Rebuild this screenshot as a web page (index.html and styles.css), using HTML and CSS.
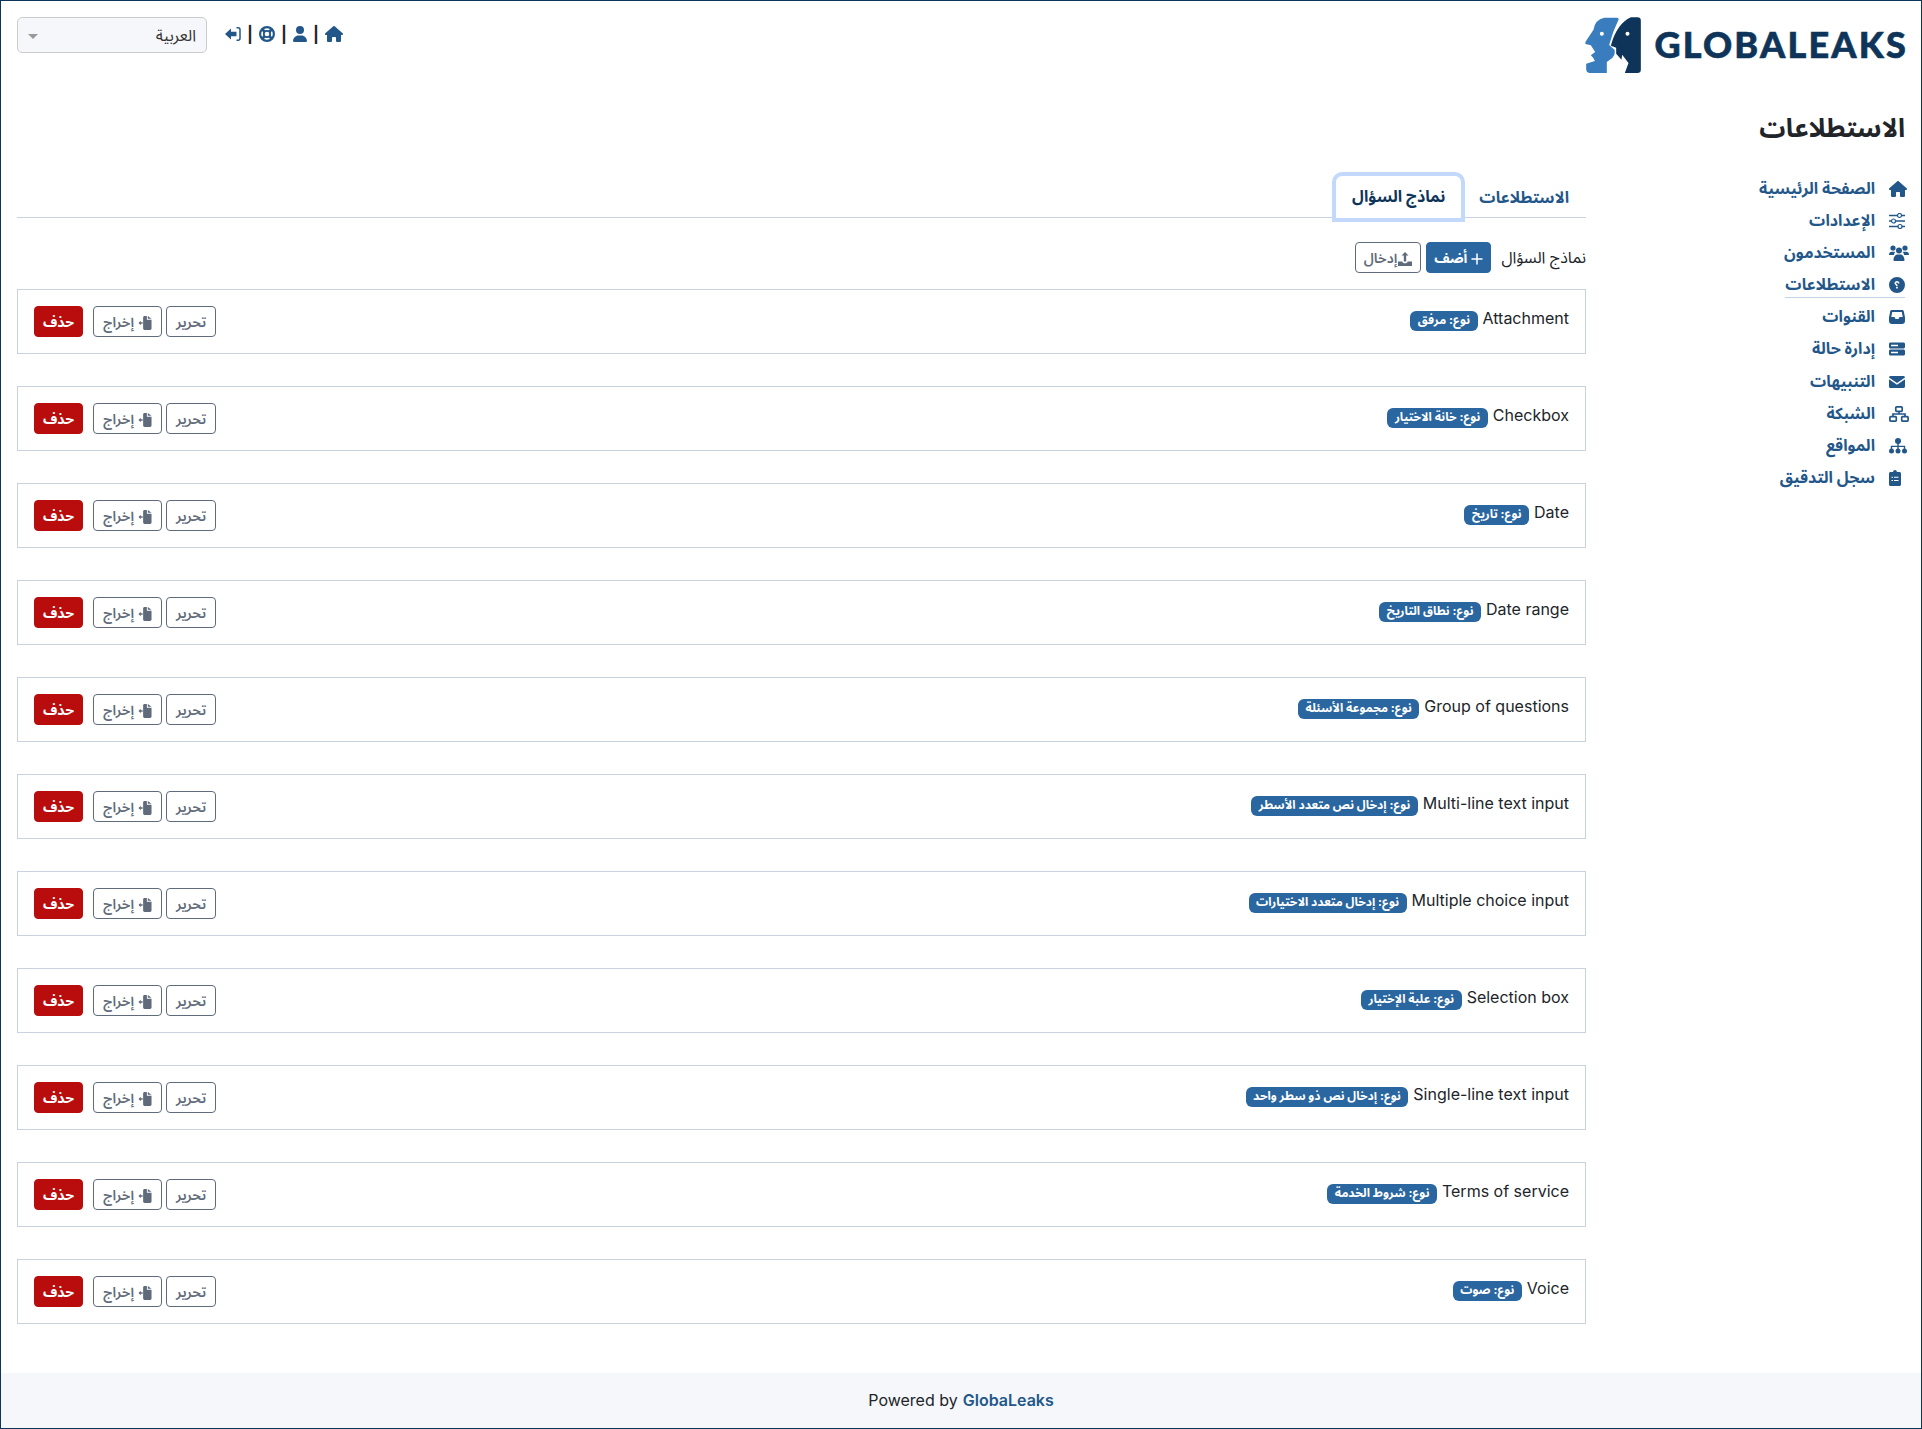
FILE: index.html
```html
<!DOCTYPE html>
<html lang="ar" dir="rtl">
    <head>
        <title>GlobaLeaks</title><meta charset="UTF-8">
        <link rel="stylesheet" href="styles.css">
    </head>
    <body>
        <svg class="sprite" xmlns="http://www.w3.org/2000/svg">
            <symbol id="i-home" viewBox="0 0 576 512"><path d="M575.8 255.5c0 18-15 32.1-32 32.1h-32l.7 160.2c0 2.7-.2 5.4-.5 8.1V472c0 22.1-17.9 40-40 40H456c-1.1 0-2.2 0-3.3-.1c-1.4 .1-2.8 .1-4.2 .1H416 392c-22.1 0-40-17.9-40-40V448 384c0-17.7-14.3-32-32-32H256c-17.7 0-32 14.3-32 32v64 24c0 22.1-17.9 40-40 40H160 128.1c-1.5 0-3-.1-4.5-.2c-1.2 .1-2.4 .2-3.6 .2H104c-22.1 0-40-17.9-40-40V360c0-.9 0-1.9 .1-2.8V287.6H32c-18 0-32-14-32-32.1c0-9 3-17 10-24L266.4 8c7-7 15-8 22-8s15 2 21 7L564.8 231.5c8 7 12 15 11 24z"/></symbol>
            <symbol id="i-user" viewBox="0 0 448 512"><path d="M224 256A128 128 0 1 0 224 0a128 128 0 1 0 0 256zm-45.7 48C79.8 304 0 383.8 0 482.3C0 498.7 13.3 512 29.7 512H418.3c16.4 0 29.7-13.3 29.7-29.7C448 383.8 368.2 304 269.7 304H178.3z"/></symbol>
            <symbol id="i-ring" viewBox="0 0 16 16"><circle cx="8" cy="8" r="6.900" fill="none" stroke="currentColor" stroke-width="2.200"/><circle cx="8" cy="8" r="3.200" fill="none" stroke="currentColor" stroke-width="1.800"/><path d="M3.200 3.200l2.500 2.500M12.800 3.200l-2.500 2.500M3.200 12.800l2.500-2.500M12.800 12.800l-2.500-2.500" stroke="currentColor" stroke-width="2.800"/></symbol>
            <symbol id="i-signin" viewBox="0 0 16 16"><path d="M0 8l6-5.500v3.300h5.500v4.400H6v3.300z"/><path d="M11.500 1.800h1.500a2 2 0 0 1 2 2v8.400a2 2 0 0 1-2 2h-1.500" fill="none" stroke="currentColor" stroke-width="1.500"/></symbol>
            <symbol id="i-sliders" viewBox="0 0 16 16"><path d="M0 2.500h16M0 8h16M0 13.500h16" stroke="currentColor" stroke-width="1.400"/><circle cx="10.500" cy="2.500" r="2" fill="#fff" stroke="currentColor" stroke-width="1.200"/><circle cx="4.500" cy="8" r="2" fill="#fff" stroke="currentColor" stroke-width="1.200"/><circle cx="11" cy="13.500" r="2" fill="#fff" stroke="currentColor" stroke-width="1.200"/></symbol>
            <symbol id="i-users" viewBox="0 0 20 16"><circle cx="4" cy="3" r="2.600"/><circle cx="16" cy="3" r="2.600"/><circle cx="10" cy="5.500" r="3"/><path d="M0 10c0-2 1-3.200 3-3.200h2c.4 0 .8.100 1.100.200C5.300 8 5 9 5 10H0zM15 10c0-1-.3-2-1.100-3 .3-.1.700-.2 1.100-.2h2c2 0 3 1.200 3 3.200h-5zM4.500 15c0-3 1.800-5.500 4-5.500h3c2.200 0 4 2.500 4 5.500 0 .6-.4 1-1 1h-9c-.6 0-1-.4-1-1z"/></symbol>
            <symbol id="i-question" viewBox="0 0 16 16"><path fill-rule="evenodd" d="M8 0a8 8 0 1 1 0 16A8 8 0 0 1 8 0zM10.500 6.500H8.900c0-.6-.4-1-.9-1s-.9.300-.9.800c0 .8 1.600 1 1.600 2.700H7.200c0-1.100-1.700-1.400-1.700-2.800C5.500 5 6.600 4 8 4c1.500 0 2.500 1 2.500 2.500zM7.100 9.800v1.700h1.700V9.800z"/></symbol>
            <symbol id="i-inbox" viewBox="0 0 16 14"><path fill-rule="evenodd" d="M3 0h10c.9 0 1.500.5 1.800 1.300L16 7.500V11c0 1.700-1.300 3-3 3H3c-1.700 0-3-1.300-3-3V7.500l1.200-6.200C1.500.5 2.100 0 3 0zm.2 2L2.300 7h3.200l1 2h3l1-2h3.200l-.9-5z"/></symbol>
            <symbol id="i-server" viewBox="0 0 16 13"><path fill-rule="evenodd" d="M1.500 0h13c.8 0 1.500.7 1.500 1.500v3c0 .8-.7 1.500-1.500 1.500h-13C.7 6 0 5.300 0 4.500v-3C0 .7.700 0 1.500 0zm0 7h13c.8 0 1.500.7 1.500 1.500v3c0 .8-.7 1.500-1.500 1.500h-13C.7 13 0 12.300 0 11.500v-3C0 7.700.700 7 1.500 7zM2 2.300v1.400h7V2.300zM2 9.300v1.400h7V9.300z"/></symbol>
            <symbol id="i-mail" viewBox="0 0 16 12"><path d="M1.500 0h13C15.300 0 16 .7 16 1.500L8 7 0 1.500C0 .7.700 0 1.500 0zM0 3.200l8 5.500 8-5.500v7.300c0 .8-.7 1.500-1.500 1.500h-13C.7 12 0 11.300 0 10.500z"/></symbol>
            <symbol id="i-network" viewBox="0 0 20 16"><g fill="none" stroke="currentColor" stroke-width="1.700"><rect x="6.800" y=".9" width="6.400" height="4.400" rx=".8"/><rect x=".9" y="10.700" width="6.400" height="4.400" rx=".8"/><rect x="12.700" y="10.700" width="6.400" height="4.400" rx=".8"/><path d="M10 5v3M4 10.500V8h12v2.500"/></g></symbol>
            <symbol id="i-sitemap" viewBox="0 0 18 16"><circle cx="9" cy="3" r="3"/><circle cx="2.500" cy="13" r="2.500"/><circle cx="9" cy="13" r="2.500"/><circle cx="15.500" cy="13" r="2.500"/><path d="M8.300 5h1.400v2.700h6.500V11h-1.400V9.100H9.700V11H8.300V9.100H3.200V11H1.800V7.700h6.500z"/></symbol>
            <symbol id="i-clipboard" viewBox="0 0 12 16"><path fill-rule="evenodd" d="M4 2c.2-1.200 1-2 2-2s1.800.8 2 2h2.500c.8 0 1.500.7 1.500 1.500v11c0 .8-.7 1.500-1.500 1.500h-9C.7 16 0 15.300 0 14.500v-11C0 2.700.7 2 1.500 2zM2.500 6.800v1h1.500v-1zM5 6.800v1h4.500v-1zM2.500 10v1h1.500v-1zM5 10v1h4.500v-1z"/></symbol>
            <symbol id="i-plus" viewBox="0 0 12 12"><path d="M6 1v10M1 6h10" stroke="currentColor" stroke-width="1.500" stroke-linecap="round"/></symbol>
            <symbol id="i-upload" viewBox="0 0 14 14"><path d="M7 0l3.500 3.600H8.200v6H5.800v-6H3.500z"/><path d="M0 9.500h4.300c.2 1 1.200 1.800 2.700 1.800s2.500-.8 2.700-1.800H14V14H0z"/></symbol>
            <symbol id="i-export" viewBox="0 0 14 15"><path d="M5 1.500C5 .7 5.700 0 6.500 0H9v4h5v9.500c0 .8-.7 1.500-1.500 1.500h-6C5.700 15 5 14.300 5 13.500zM10 0l4 3h-4z"/><path d="M0 7.500l2.400-2.400v1.600H4.500v1.600H2.400v1.600z"/></symbol>
        </svg>

        <div class="page">
            <div class="header">
                <a class="logo" href="#">
                    <svg class="logo-mark" viewBox="75 50 167 168" xmlns="http://www.w3.org/2000/svg">
                        <path class="face-blue" d="M132 52H170Q177 52 175 58Q158 92 147 134L163 148Q166 165 157 172L140 185V218H88Q78 216 78 205V190L104 182Q100 172 92 165L105 155L92 135L76 131Q74 126 79 120L100 88Q104 58 132 52Z"/>
                        <circle class="eye-white" cx="125" cy="100" r="6"/>
                        <path class="face-dark" d="M212 51H232Q242 51 242 61V208Q242 218 232 218H194L205 188L186 163L184 178L168 160V142L152 136Q170 70 212 51Z"/>
                        <circle class="eye-white" cx="202" cy="100" r="6"/>
                    </svg>
                    <span class="logo-text">GLOBALEAKS</span>
                </a>
                <div class="tools">
                    <div class="quick">
                        <a href="#"><svg class="ico-home"><use href="#i-home"/></svg></a>
                        <span class="sep">|</span>
                        <a href="#"><svg class="ico-user"><use href="#i-user"/></svg></a>
                        <span class="sep">|</span>
                        <a href="#"><svg class="ico-ring"><use href="#i-ring"/></svg></a>
                        <span class="sep">|</span>
                        <a href="#"><svg class="ico-signin"><use href="#i-signin"/></svg></a>
                    </div>
                    <div class="lang">
                        <span>العربية</span>
                        <i class="caret"></i>
                    </div>
                </div>
            </div>

            <div class="content">
                <div class="aside">
                    <h1>الاستطلاعات</h1>
                    <ul class="menu">
                        <li><a href="#"><span class="ic"><svg class="w18"><use href="#i-home"/></svg></span>الصفحة الرئيسية</a></li>
                        <li><a href="#"><span class="ic"><svg class="w16"><use href="#i-sliders"/></svg></span>الإعدادات</a></li>
                        <li><a href="#"><span class="ic"><svg class="w20"><use href="#i-users"/></svg></span>المستخدمون</a></li>
                        <li><a href="#" class="active"><span class="ic"><svg class="w16"><use href="#i-question"/></svg></span>الاستطلاعات</a></li>
                        <li><a href="#"><span class="ic"><svg class="w16"><use href="#i-inbox"/></svg></span>القنوات</a></li>
                        <li><a href="#"><span class="ic"><svg class="w16"><use href="#i-server"/></svg></span>إدارة حالة</a></li>
                        <li><a href="#"><span class="ic"><svg class="w16"><use href="#i-mail"/></svg></span>التنبيهات</a></li>
                        <li><a href="#"><span class="ic"><svg class="w20"><use href="#i-network"/></svg></span>الشبكة</a></li>
                        <li><a href="#"><span class="ic"><svg class="w18"><use href="#i-sitemap"/></svg></span>المواقع</a></li>
                        <li><a href="#"><span class="ic"><svg class="w12"><use href="#i-clipboard"/></svg></span>سجل التدقيق</a></li>
                    </ul>
                </div>

                <div class="mainbox">
                    <div class="tabs">
                        <a href="#" class="tab">الاستطلاعات</a>
                        <a href="#" class="tab tab-on">نماذج السؤال</a>
                    </div>
                    <div class="toolbar">
                        <span>نماذج السؤال</span>
                        <button class="btn btn-add"><svg class="btn-ico12"><use href="#i-plus"/></svg>أضف</button>
                        <button class="btn btn-line btn-tight"><svg class="btn-ico"><use href="#i-upload"/></svg>إدخال</button>
                    </div>

                    <div class="card">
                        <div class="card-title"><span dir="ltr">Attachment</span><span class="badge">نوع: مرفق</span></div>
                        <div class="card-btns"><button class="btn btn-line">تحرير</button><button class="btn btn-line"><svg class="btn-ico"><use href="#i-export"/></svg>إخراج</button><button class="btn btn-del">حذف</button></div>
                    </div>
                    <div class="card">
                        <div class="card-title"><span dir="ltr">Checkbox</span><span class="badge">نوع: خانة الاختيار</span></div>
                        <div class="card-btns"><button class="btn btn-line">تحرير</button><button class="btn btn-line"><svg class="btn-ico"><use href="#i-export"/></svg>إخراج</button><button class="btn btn-del">حذف</button></div>
                    </div>
                    <div class="card">
                        <div class="card-title"><span dir="ltr">Date</span><span class="badge">نوع: تاريخ</span></div>
                        <div class="card-btns"><button class="btn btn-line">تحرير</button><button class="btn btn-line"><svg class="btn-ico"><use href="#i-export"/></svg>إخراج</button><button class="btn btn-del">حذف</button></div>
                    </div>
                    <div class="card">
                        <div class="card-title"><span dir="ltr">Date range</span><span class="badge">نوع: نطاق التاريخ</span></div>
                        <div class="card-btns"><button class="btn btn-line">تحرير</button><button class="btn btn-line"><svg class="btn-ico"><use href="#i-export"/></svg>إخراج</button><button class="btn btn-del">حذف</button></div>
                    </div>
                    <div class="card">
                        <div class="card-title"><span dir="ltr">Group of questions</span><span class="badge">نوع: مجموعة الأسئلة</span></div>
                        <div class="card-btns"><button class="btn btn-line">تحرير</button><button class="btn btn-line"><svg class="btn-ico"><use href="#i-export"/></svg>إخراج</button><button class="btn btn-del">حذف</button></div>
                    </div>
                    <div class="card">
                        <div class="card-title"><span dir="ltr">Multi-line text input</span><span class="badge">نوع: إدخال نص متعدد الأسطر</span></div>
                        <div class="card-btns"><button class="btn btn-line">تحرير</button><button class="btn btn-line"><svg class="btn-ico"><use href="#i-export"/></svg>إخراج</button><button class="btn btn-del">حذف</button></div>
                    </div>
                    <div class="card">
                        <div class="card-title"><span dir="ltr">Multiple choice input</span><span class="badge">نوع: إدخال متعدد الاختيارات</span></div>
                        <div class="card-btns"><button class="btn btn-line">تحرير</button><button class="btn btn-line"><svg class="btn-ico"><use href="#i-export"/></svg>إخراج</button><button class="btn btn-del">حذف</button></div>
                    </div>
                    <div class="card">
                        <div class="card-title"><span dir="ltr">Selection box</span><span class="badge">نوع: علبة الإختيار</span></div>
                        <div class="card-btns"><button class="btn btn-line">تحرير</button><button class="btn btn-line"><svg class="btn-ico"><use href="#i-export"/></svg>إخراج</button><button class="btn btn-del">حذف</button></div>
                    </div>
                    <div class="card">
                        <div class="card-title"><span dir="ltr">Single-line text input</span><span class="badge">نوع: إدخال نص ذو سطر واحد</span></div>
                        <div class="card-btns"><button class="btn btn-line">تحرير</button><button class="btn btn-line"><svg class="btn-ico"><use href="#i-export"/></svg>إخراج</button><button class="btn btn-del">حذف</button></div>
                    </div>
                    <div class="card">
                        <div class="card-title"><span dir="ltr">Terms of service</span><span class="badge">نوع: شروط الخدمة</span></div>
                        <div class="card-btns"><button class="btn btn-line">تحرير</button><button class="btn btn-line"><svg class="btn-ico"><use href="#i-export"/></svg>إخراج</button><button class="btn btn-del">حذف</button></div>
                    </div>
                    <div class="card">
                        <div class="card-title"><span dir="ltr">Voice</span><span class="badge">نوع: صوت</span></div>
                        <div class="card-btns"><button class="btn btn-line">تحرير</button><button class="btn btn-line"><svg class="btn-ico"><use href="#i-export"/></svg>إخراج</button><button class="btn btn-del">حذف</button></div>
                    </div>
                </div>
            </div>

            <div class="footer" dir="ltr">Powered by <a href="#">GlobaLeaks</a></div>
        </div>
    </body>
</html>
```

FILE: styles.css
```css
* {margin: 0; padding: 0; box-sizing: border-box;}
html, body {height: 100%;}
body {font-family: Inter, "Noto Sans Arabic", sans-serif; font-size: 16px; color: #212529; background: #fff;}
a {color: #23578a; text-decoration: none;}
svg {fill: currentColor; display: block;}
.sprite {display: none;}

.page {min-height: 100%; border: 1px solid #0e3559; display: flex; flex-direction: column;}

/* header */
.header {display: flex; justify-content: space-between; align-items: flex-start; padding: 16px 16px 0 16px; height: 72px;}
.logo {display: flex; direction: ltr; align-items: center; gap: 13px; color: #0e3559; margin-right: -3px;}
.logo-mark {width: 56px; height: 56px;}
.face-blue {fill: #3a7dbe;}
.face-dark {fill: #0e3559;}
.eye-white {fill: #fff;}
.logo-text {font-family: Lato, sans-serif; font-weight: 900; font-size: 36px; letter-spacing: 2.2px; line-height: 1; margin-top: -2px; -webkit-text-stroke: 0.6px #0e3559;}
.tools {display: flex; align-items: center; gap: 18px;}
.quick {display: flex; align-items: center; gap: 6px; height: 36px; margin-top: -2px;}
.sep {color: #212529; font-size: 16px; font-weight: 700;}
.ico-home {width: 18px; height: 16px;}
.ico-user {width: 14px; height: 16px;}
.ico-ring {width: 16px; height: 16px;}
.ico-signin {width: 16px; height: 16px;}
.lang {width: 190px; height: 36px; background: #f5f7fa; border: 1px solid #ccc; border-radius: 5px; display: flex; align-items: center; justify-content: space-between; padding: 2px 10px 0 10px; color: #333;}
.caret {width: 0; height: 0; border-top: 5px solid #999; border-left: 5px solid transparent; border-right: 5px solid transparent;}

/* layout */
.content {display: grid; grid-template-columns: 335px 1fr; flex: 1;}
.aside {padding: 40px 16px 0 0;}
.aside h1 {font-size: 26px; font-weight: 700; line-height: 29px; margin-bottom: 30px;}
.menu {list-style: none;}
.menu li {height: 32.2px; padding-top: 4px;}
.menu a {display: inline-flex; align-items: center; gap: 14px; height: 25px; font-weight: 700;}
.menu a.active {border-bottom: 1px solid #c5d3e6;}
.ic {width: 16px; display: flex; justify-content: flex-end;}
.ic svg {flex: none; height: 16px;}
.w12 {width: 12px;}
.w16 {width: 16px;}
.w18 {width: 18px;}
.w20 {width: 20px;}

/* main */
.mainbox {padding: 99px 0 0 16px;}
.tabs {display: flex; height: 46px; border-bottom: 1px solid #c8d3df;}
.tab {padding: 0 17px 0 14px; height: 50px; display: flex; align-items: center; font-weight: 700; font-size: 16px; margin-top: 1px;}
.tab-on {color: #0e3559; background: #fff; border: 4px solid #c2d9fb; border-radius: 10px 10px 0 0; margin-top: 0; padding: 0 16px; position: relative;}
.toolbar {display: flex; align-items: center; gap: 5px; height: 31px; margin: 24px 0 16px 0; font-size: 16px;}
.toolbar span {margin-left: 5px;}
.btn {height: 31px; padding: 2px 9px 0 9px; border-radius: 4px; font-family: inherit; font-size: 14px; display: inline-flex; align-items: center; gap: 4px; background: #fff; cursor: pointer;}
.btn-ico {width: 14px; height: 14px;}
.btn-ico12 {width: 12px; height: 12px;}
.btn-line {border: 1px solid #5f6b7a; color: #5f6b7a; font-weight: 600;}
.btn-tight {gap: 1px; padding: 2px 8px 0 8px;}
.btn-add {border: 1px solid #2a669f; background: #2a669f; color: #fff; font-weight: 700; padding: 2px 7px 0 7px;}
.btn-del {border: 1px solid #b90d0d; background: #b90d0d; color: #fff; font-weight: 700; padding: 2px 8px 0 8px; margin-right: 6px;}
.card {height: 65px; border: 1px solid #c8d3df; margin-bottom: 32px; padding: 0 16px; display: flex; justify-content: space-between; align-items: center;}
.card-title {display: flex; align-items: center; gap: 5px; margin-top: -8px;}
.badge {background: #2a669f; color: #fff; font-size: 12px; font-weight: 700; border-radius: 6px; height: 20px; padding: 0 7.5px; display: flex; align-items: center; margin-top: 6px;}
.card-btns {display: flex; gap: 4px;}

/* footer */
.footer {height: 55px; background: #f5f7fa; display: flex; align-items: center; justify-content: center; gap: 5px; font-size: 16px; margin-top: 6px; padding-bottom: 2px;}
.footer a {font-weight: 600;}
```
